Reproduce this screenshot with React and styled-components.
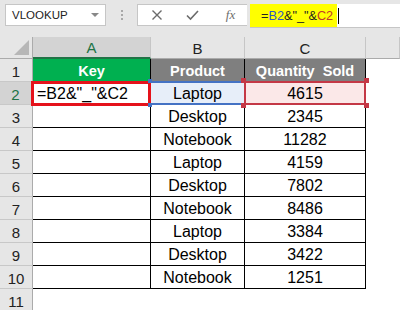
import React from "react";
import styled, { createGlobalStyle, css } from "styled-components";

const GlobalStyle = createGlobalStyle`
  html, body { margin: 0; padding: 0; background: #ffffff; overflow: hidden; }
  body { font-family: "Liberation Sans", Arial, sans-serif; }
`;

const Page = styled.div`
  width: 400px;
  height: 310px;
  overflow: hidden;
  background: #ffffff;
`;

const Toolbar = styled.div`
  display: flex;
  align-items: flex-start;
  height: 37px;
  padding-top: 4px;
  box-sizing: border-box;
  background: #e6e6e6;
`;

const NameBox = styled.div`
  margin-left: 5px;
  width: 101px;
  height: 22px;
  box-sizing: border-box;
  background: #ffffff;
  border: 1px solid #c6c6c6;
  display: flex;
  align-items: center;
  justify-content: space-between;
  padding: 0 6px 0 6px;
  font-size: 11.5px;
  color: #222;
`;

const Caret = styled.span`
  width: 0;
  height: 0;
  border-left: 4px solid transparent;
  border-right: 4px solid transparent;
  border-top: 4px solid #888;
`;

const Dots = styled.div`
  width: 31px;
  height: 22px;
  display: flex;
  flex-direction: column;
  align-items: center;
  justify-content: center;
  gap: 2px;
  span {
    width: 2px;
    height: 2px;
    background: #a8a8a8;
  }
`;

const ActionBox = styled.div`
  width: 110px;
  height: 22px;
  box-sizing: border-box;
  background: #ffffff;
  border: 1px solid #c6c6c6;
  border-right: none;
  display: grid;
  grid-template-columns: 38px 32px 1fr;
  align-items: center;
  justify-items: center;
`;

const Fx = styled.span`
  font-family: "Liberation Serif", "Times New Roman", serif;
  font-style: italic;
  font-size: 13px;
  color: #6d6d6d;
  padding-left: 6px;
`;

const FormulaBar = styled.div`
  margin-left: 3px;
  flex: 1;
  height: 24px;
  box-sizing: border-box;
  background: #ffffff;
  border-bottom: 1px solid #c6c6c6;
  display: flex;
  align-items: stretch;
`;

const Highlight = styled.div`
  width: 87px;
  box-sizing: border-box;
  background: #ffff00;
  display: flex;
  align-items: center;
  padding-left: 11px;
  font-size: 12.7px;
  color: #222;
  white-space: pre;
`;

const Ref = styled.span`
  color: ${(p) => p.$color};
`;

const Cursor = styled.span`
  width: 1px;
  height: 16px;
  margin-left: 1px;
  align-self: center;
  background: #000;
`;

const Sheet = styled.div`
  display: grid;
  grid-template-columns: 33px 118px 94px 121px 1fr;
  grid-template-rows: 22px repeat(11, 23px);
  font-size: 16px;
`;

const Corner = styled.div`
  background: #e6e6e6;
  border-right: 1px solid #ababab;
  border-bottom: 1px solid #ababab;
  box-sizing: border-box;
  position: relative;
  &::after {
    content: "";
    position: absolute;
    right: 3px;
    bottom: 3px;
    width: 0;
    height: 0;
    border-left: 15px solid transparent;
    border-bottom: 15px solid #b7b7b7;
  }
`;

const ColHead = styled.div`
  box-sizing: border-box;
  background: ${(p) => (p.$active ? "#d3d3d3" : "#e6e6e6")};
  color: ${(p) => (p.$active ? "#217346" : "#222")};
  border-right: 1px solid #c6c6c6;
  border-bottom: ${(p) => (p.$active ? "2px solid #217346" : "1px solid #ababab")};
  display: flex;
  align-items: center;
  justify-content: center;
  font-size: 15px;
  padding-top: 1px;
`;

const RowHead = styled.div`
  box-sizing: border-box;
  background: ${(p) => (p.$active ? "#d3d3d3" : "#e6e6e6")};
  color: ${(p) => (p.$active ? "#217346" : "#222")};
  border-right: ${(p) => (p.$active ? "2px solid #217346" : "1px solid #ababab")};
  border-bottom: 1px solid #c8c8c8;
  display: flex;
  align-items: center;
  justify-content: center;
  font-size: 15px;
  padding-top: 2px;
`;

const Cell = styled.div`
  box-sizing: border-box;
  position: relative;
  display: flex;
  align-items: center;
  justify-content: ${(p) => (p.$left ? "flex-start" : "center")};
  padding: 2px 0 0 ${(p) => (p.$left ? "4px" : "0")};
  white-space: pre;
  color: #000;
  background: ${(p) => p.$bg || "transparent"};
  ${(p) =>
    p.$bordered &&
    css`
      border-right: 1px solid #000;
      border-bottom: 1px solid #000;
    `}
  ${(p) =>
    p.$head &&
    css`
      color: #ffffff;
      font-weight: bold;
      font-size: 14.5px;
    `}
`;

const EditBox = styled.div`
  position: absolute;
  left: -2px;
  top: -1px;
  right: -1px;
  bottom: -2px;
  border: 3px solid #e5121b;
  pointer-events: none;
`;

const RangeFrame = styled.div`
  position: absolute;
  left: -1px;
  top: -1px;
  right: ${(p) => (p.$sides ? "-1px" : "0")};
  bottom: -1px;
  border-top: 2px solid ${(p) => p.$color};
  border-bottom: 2px solid ${(p) => p.$color};
  ${(p) =>
    p.$sides &&
    css`
      border-left: 2px solid ${p.$color};
      border-right: 2px solid ${p.$color};
    `}
  pointer-events: none;
`;

const Handle = styled.span`
  position: absolute;
  width: ${(p) => p.$size}px;
  height: ${(p) => p.$size}px;
  background: ${(p) => p.$color};
  ${(p) => (p.$top ? "top" : "bottom")}: -${(p) => Math.ceil(p.$size / 2) + 1}px;
  ${(p) => (p.$leftSide ? "left" : "right")}: -${(p) => Math.ceil(p.$size / 2) + 1}px;
  z-index: 2;
`;

const XIcon = () => (
  <svg width="12" height="12" viewBox="0 0 12 12">
    <path d="M1.5 1.5 L10.5 10.5 M10.5 1.5 L1.5 10.5" stroke="#6b6b6b" strokeWidth="1.4" fill="none" />
  </svg>
);

const CheckIcon = () => (
  <svg width="13" height="12" viewBox="0 0 13 12">
    <path d="M1 6.5 L4.5 10 L12 2" stroke="#6b6b6b" strokeWidth="1.6" fill="none" />
  </svg>
);

const data = [
  ["Laptop", "4615"],
  ["Desktop", "2345"],
  ["Notebook", "11282"],
  ["Laptop", "4159"],
  ["Desktop", "7802"],
  ["Notebook", "8486"],
  ["Laptop", "3384"],
  ["Desktop", "3422"],
  ["Notebook", "1251"],
];

const Handles = ({ color, size, left = true, right = true }) => (
  <>
    {left && <Handle $color={color} $size={size} $top $leftSide />}
    {left && <Handle $color={color} $size={size} $leftSide />}
    {right && <Handle $color={color} $size={size} $top />}
    {right && <Handle $color={color} $size={size} />}
  </>
);

export default function App() {
  return (
    <Page>
      <GlobalStyle />
      <Toolbar>
        <NameBox>
          VLOOKUP
          <Caret />
        </NameBox>
        <Dots>
          <span />
          <span />
          <span />
        </Dots>
        <ActionBox>
          <XIcon />
          <CheckIcon />
          <Fx>fx</Fx>
        </ActionBox>
        <FormulaBar>
          <Highlight>
            =<Ref $color="#2f56c6">B2</Ref>&amp;"_"&amp;<Ref $color="#c0392b">C2</Ref>
          </Highlight>
          <Cursor />
        </FormulaBar>
      </Toolbar>
      <Sheet>
        <Corner />
        <ColHead $active>A</ColHead>
        <ColHead>B</ColHead>
        <ColHead>C</ColHead>
        <ColHead />

        <RowHead>1</RowHead>
        <Cell $bordered $head $bg="#00b050">Key</Cell>
        <Cell $bordered $head $bg="#7f7f7f">Product</Cell>
        <Cell $bordered $head $bg="#7f7f7f">Quantity  Sold</Cell>
        <Cell />

        {data.map(([product, qty], i) => {
          const row = i + 2;
          const first = i === 0;
          return (
            <React.Fragment key={row}>
              <RowHead $active={first}>{row}</RowHead>
              <Cell $bordered $left={first}>
                {first ? '=B2&"_"&C2' : ""}
                {first && <EditBox />}
              </Cell>
              <Cell $bordered $bg={first ? "#e7eef9" : undefined}>
                {product}
                {first && <RangeFrame $color="#4472c4" />}
                {first && <Handles color="#4472c4" size={4} right={false} />}
              </Cell>
              <Cell $bordered $bg={first ? "#fbe8e8" : undefined}>
                {qty}
                {first && <RangeFrame $color="#c43846" $sides />}
                {first && <Handles color="#c43846" size={5} />}
              </Cell>
              <Cell />
            </React.Fragment>
          );
        })}

        <RowHead>11</RowHead>
        <Cell />
        <Cell />
        <Cell />
        <Cell />
      </Sheet>
    </Page>
  );
}
